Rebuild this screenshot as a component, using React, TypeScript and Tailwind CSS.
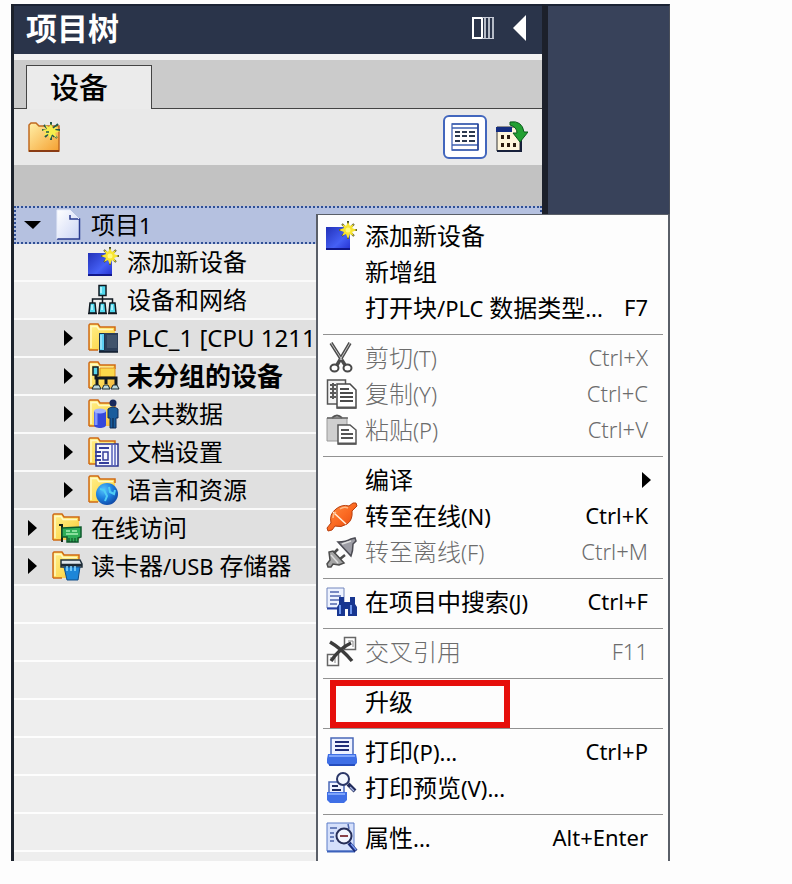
import type { ReactNode } from "react";
import clsx from "clsx";

type IconProps = { children: ReactNode };

function Icon({ children }: IconProps) {
  return (
    <svg viewBox="0 0 32 32" className="h-8 w-8 shrink-0" aria-hidden>
      {children}
    </svg>
  );
}

// Yellow folder that most tree icons sit on top of.
function Folder({ children }: IconProps) {
  return (
    <Icon>
      <defs>
        <linearGradient id="folder" x1="0" y1="0" x2="1" y2="1">
          <stop offset="0" stopColor="#fff08a" />
          <stop offset="0.6" stopColor="#fddc58" />
          <stop offset="1" stopColor="#f7b23c" />
        </linearGradient>
      </defs>
      <path d="M1 28V3l1-1h8l2 3h15v23z" fill="url(#folder)" />
      <path d="M1 28V3l1-1h8l2 3h15v4" fill="none" stroke="#cf6a14" strokeWidth="1.5" />
      <path d="M3 26V4.500h6l2 3h14" fill="none" stroke="#fff9c4" strokeWidth="1.500" />
      <path d="M1 28h9" stroke="#cf6a14" strokeWidth="1.5" />
      {children}
    </Icon>
  );
}

function Star({ x, y }: { x: number; y: number }) {
  return (
    <g transform={`translate(${x} ${y})`}>
      <path d="M0-9V9M-9 0H9M-6-6L6 6M6-6L-6 6" stroke="#454a30" strokeWidth="2" />
      <path d="M0-8l2 4 4-2-2 4 5 2-5 2 2 4-4-2-2 5-2-5-4 2 2-4-5-2 5-2-2-4 4 2z" fill="#f8e532" />
      <circle r="2.500" fill="#fffa80" />
    </g>
  );
}

const NewDeviceIcon = () => (
  <Icon>
    <defs>
      <linearGradient id="cube" x1="0" y1="0" x2="1" y2="1">
        <stop offset="0" stopColor="#2231b8" />
        <stop offset="0.6" stopColor="#4560f5" />
        <stop offset="1" stopColor="#2430d0" />
      </linearGradient>
    </defs>
    <path d="M0 7h24v23H0z" fill="url(#cube)" />
    <path d="M0 29h24" stroke="#10178a" strokeWidth="2" />
    <Star x={22} y={10} />
  </Icon>
);

const ProjectIcon = () => (
  <Icon>
    <defs>
      <linearGradient id="page" x1="0" y1="0" x2="1" y2="1">
        <stop offset="0" stopColor="#ffffff" />
        <stop offset="1" stopColor="#ccd5f5" />
      </linearGradient>
    </defs>
    <path d="M5 1h13l9 9v20H5z" fill="url(#page)" />
    <path d="M5 30h22.500V10H18V6" fill="none" stroke="#2b3c90" strokeWidth="1.5" />
    <path d="M5 30V1h13l9 9" fill="none" stroke="#e8edfb" />
  </Icon>
);

const NetworkIcon = () => (
  <Icon>
    <path d="M14.500 11v9M4.500 20v-5h20v5" fill="none" stroke="#101820" strokeWidth="1.5" />
    <g fill="#52d8ee" stroke="#101820" strokeWidth="1.500">
      <path d="M11 1.500h7v10h-7z" />
      <path d="M1 29l1-10h5l1 10zM11 29l1-10h5l1 10zM21 29l1-10h5l1 10z" />
    </g>
    <path d="M13 3v6M4 21v5M14 21v5M24 21v5" stroke="#c8f8ff" strokeWidth="1.5" />
    <path d="M0 29.500h9M10 29.500h9M20 29.500h9" stroke="#101820" strokeWidth="1.500" />
  </Icon>
);

const PlcIcon = () => (
  <Folder>
    <path d="M11 11h19v19H11z" fill="#2c3e58" />
    <path d="M11.500 11.500h5v17h-5z" fill="#5cd0f4" stroke="#1b3650" />
    <path d="M13 13v14" stroke="#c4f2ff" />
    <path d="M19 13h10v13H19z" fill="#40536b" />
    <path d="M11 30h19" stroke="#0e1a2a" strokeWidth="1.500" />
  </Folder>
);

const UngroupedIcon = () => (
  <Folder>
    <path d="M12 8h15v9H12z" fill="#fbd84a" stroke="#e0901c" />
    <path d="M5 7h5v8H5z" fill="#58d6ea" stroke="#101820" strokeWidth="1.5" />
    <path d="M8 15v3h20v7M9 18v7M18 18v6" fill="none" stroke="#101820" strokeWidth="3" />
    <path d="M4 29l2-4h5l2 4zM14 29l2-4h4l2 4zM23 29l2-4h4l2 4z" fill="#bcd8dc" stroke="#18262a" />
  </Folder>
);

const CommonDataIcon = () => (
  <Folder>
    <path d="M6 13v14c0 4 12 4 12 0V13z" fill="#3448dc" />
    <path d="M8 14v13" stroke="#7f95ff" strokeWidth="3" />
    <ellipse cx="12" cy="13" rx="6" ry="2.500" fill="#a3b4ff" />
    <circle cx="25" cy="5" r="3.500" fill="#16285c" />
    <path d="M20 11q5-4 10 0v9h-2v10h-6V20h-2z" fill="#195c9c" stroke="#112c58" />
    <path d="M25 20v10" stroke="#0c2040" />
  </Folder>
);

const DocSettingsIcon = () => (
  <Folder>
    <path d="M8 8h22v22H8z" fill="#f5f7ff" stroke="#2b3490" strokeWidth="1.500" />
    <path d="M24 8v22M27 8v22" stroke="#5661bb" strokeWidth="1.500" />
    <path d="M11 12h10M7 16h6M7 20h6M7 24h6M11 27h10" stroke="#343e9c" strokeWidth="1.800" />
    <path d="M15 16h5v8h-5z" fill="none" stroke="#343e9c" strokeWidth="1.500" />
  </Folder>
);

const LanguageIcon = () => (
  <Folder>
    <defs>
      <radialGradient id="globe" cx="0.35" cy="0.3" r="0.8">
        <stop offset="0" stopColor="#55c4fa" />
        <stop offset="0.5" stopColor="#1d80e0" />
        <stop offset="1" stopColor="#0c3f9c" />
      </radialGradient>
    </defs>
    <circle cx="19" cy="20" r="11" fill="url(#globe)" />
    <path d="M12 15l4 1 3 6-2 5M21 13l1 5 4 2 1-4" fill="none" stroke="#4fcdf4" strokeWidth="2" />
  </Folder>
);

const OnlineAccessIcon = () => (
  <Folder>
    <path d="M7 13h3v17" fill="none" stroke="#142018" strokeWidth="2" />
    <path d="M10 16l19-1v10l-3 1v4H15v-5h-5z" fill="#2fae58" stroke="#0e5a2c" strokeWidth="1.500" />
    <path d="M14 19h4M20 19h5M14 22h12" stroke="#a8efb4" strokeWidth="1.500" />
    <path d="M17 26v4M20 26v4M23 26v4" stroke="#0e4020" />
  </Folder>
);

const CardReaderIcon = () => (
  <Folder>
    <path d="M9 10h19l2 4v3H9z" fill="#dde5ea" stroke="#20303c" strokeWidth="1.500" />
    <path d="M9 15h21" stroke="#1d2a34" strokeWidth="2.500" />
    <path d="M12 17h16l-2 13H15z" fill="#1d86d8" stroke="#0f4c88" />
    <path d="M15 16v5M19 16v5M23 16v5" stroke="#8bdcff" strokeWidth="1.500" />
  </Folder>
);

const CutIcon = () => (
  <Icon>
    <path d="M5 1l14 22M24 1L11 23" stroke="#4c4c4c" strokeWidth="3.500" />
    <path d="M5 1l11 17M24 1L14 18" stroke="#c4c4c4" strokeWidth="1" />
    <ellipse cx="8.500" cy="26" rx="4" ry="3.500" fill="#fff" stroke="#484848" strokeWidth="2" />
    <ellipse cx="21.500" cy="26" rx="4" ry="3.500" fill="#fff" stroke="#484848" strokeWidth="2" />
  </Icon>
);

const CopyIcon = () => (
  <Icon>
    <path d="M1.500 2h18v24h-18z" fill="#f4f4f4" stroke="#555" strokeWidth="1.500" />
    <path d="M4 7h6M4 11h6M4 15h6M4 19h6M7 5v16" stroke="#5a5a5a" strokeWidth="2" />
    <path d="M11 6h13l6 6v18H11z" fill="#fff" stroke="#484848" strokeWidth="1.500" />
    <path d="M14 11h9M14 15h13M14 19h13M14 23h13" stroke="#4c4c4c" strokeWidth="2" />
    <path d="M11 29.500h19" stroke="#555" strokeWidth="2" />
  </Icon>
);

const PasteIcon = () => (
  <Icon>
    <path d="M1 4h20v23H1z" fill="#cfcfcf" stroke="#9a9a9a" />
    <path d="M6 4q5-5 10 0" fill="#ddd" stroke="#555" strokeWidth="2" />
    <path d="M1 4h21" stroke="#666" strokeWidth="1.500" />
    <path d="M12 11h12l6 5v14H12z" fill="#fff" stroke="#555" strokeWidth="1.500" />
    <path d="M15 16h8M15 20h12M15 24h12" stroke="#555" strokeWidth="2" />
    <path d="M12 29.500h18" stroke="#555" strokeWidth="2" />
  </Icon>
);

const GoOnlineIcon = () => (
  <Icon>
    <defs>
      <linearGradient id="plug" x1="0" y1="0" x2="1" y2="1">
        <stop offset="0" stopColor="#ff9044" />
        <stop offset="0.5" stopColor="#fb6a22" />
        <stop offset="1" stopColor="#e2430c" />
      </linearGradient>
    </defs>
    <path
      d="M2 31l-1-3 4-5q-2-9 5-14 6-5 13-3l4-3h3l1 3-5 5q1 9-5 13-6 4-12 2l-3 4z"
      fill="url(#plug)"
      stroke="#b8400f"
      strokeWidth="1"
    />
    <path d="M7 12l13 12" stroke="#fff0dc" strokeWidth="1.500" />
    <path d="M7 18q0-4 3-6M14 9q4-3 8-1" fill="none" stroke="#ffba86" strokeWidth="1.500" />
  </Icon>
);

const GoOfflineIcon = () => (
  <Icon>
    <path d="M12 6q8 0 13-3l4-1 1 3-3 3q0 7-2 12z" fill="#9c9ca4" stroke="#4c4c54" strokeWidth="1.500" />
    <path d="M16 8l9-3" stroke="#ddd" strokeWidth="1.500" />
    <path d="M2 31l-1-3 3-4-1-8 4-1 11 12-5 2-6-1-2 3z" fill="#a4a4a4" stroke="#4c4c4c" strokeWidth="1.500" />
    <path d="M8 17l4-4M14 23l5-4" stroke="#4c4c4c" strokeWidth="2.500" />
    <path d="M5 19l7 8" stroke="#dedede" strokeWidth="1.500" />
  </Icon>
);

const FindIcon = () => (
  <Icon>
    <path d="M1 2h17v20H1z" fill="#eef3ff" stroke="#7386bd" />
    <path d="M4 6h9M4 10h11M4 14h9M4 18h7" stroke="#5267ae" strokeWidth="1.500" />
    <path d="M1 22.500h10" stroke="#2a42a5" strokeWidth="2" />
    <path d="M13 11h5v5h6v-5h5v7l2 3v9h-9v-7h-3v7h-8v-9l2-3z" fill="#183690" />
    <path d="M14 19v9M25 19v9" stroke="#6e96ec" strokeWidth="2" />
  </Icon>
);

const CrossRefIcon = () => (
  <Icon>
    <path d="M18.500 1.500h11v12h-11zM1.500 18.500h11v11h-11z" fill="#fff" stroke="#666" strokeWidth="1.500" />
    <path d="M22 5h5v6M4 22h5v5" fill="none" stroke="#888" />
    <path d="M4 6q12 7 22 19M5 25Q14 12 25 7" fill="none" stroke="#3c3c3c" strokeWidth="3.500" />
  </Icon>
);

const PrintIcon = () => (
  <Icon>
    <path d="M5 2h22v18H5z" fill="#eef2ff" stroke="#4a68b8" strokeWidth="1.500" />
    <path d="M9 6h14M9 10h14M9 14h14" stroke="#1f2c78" strokeWidth="2" />
    <path d="M2 18h28l1 5v4l-3 3H4l-3-3v-4z" fill="#3f6fe6" />
    <path d="M3 20h26" stroke="#7ea4fa" strokeWidth="2" />
    <path d="M3 29h26" stroke="#1d42b0" strokeWidth="1.500" />
  </Icon>
);

const PreviewIcon = () => (
  <Icon>
    <path d="M3 10h15v12H3z" fill="#eef2ff" stroke="#4a68b8" strokeWidth="1.500" />
    <path d="M6 14h6M6 18h9" stroke="#1f2c60" strokeWidth="2" />
    <path d="M1 20h20v8l-3 3H4l-3-3z" fill="#3f6fe6" />
    <path d="M2 22h17" stroke="#7ea4fa" strokeWidth="2" />
    <path d="M22 12l7 7" stroke="#222c5c" strokeWidth="4" />
    <path d="M24 15l4 4" stroke="#a9b8e8" strokeWidth="1.500" />
    <circle cx="17" cy="7" r="6" fill="#f4f8ff" stroke="#2b3768" strokeWidth="2" />
  </Icon>
);

const PropertiesIcon = () => (
  <Icon>
    <path d="M1 1h27v28H1z" fill="#d5e0fb" stroke="#5c7cc8" />
    <path d="M1 29.500h28" stroke="#3c62bc" strokeWidth="2" />
    <path d="M4 6h7M4 11h4M4 15h4M4 19h4M22 2l1 5" stroke="#4a62a8" strokeWidth="1.500" />
    <path d="M23 21l7 8" stroke="#1c2c78" strokeWidth="4" />
    <path d="M25 22l5 6" stroke="#7a9af0" strokeWidth="1.500" />
    <circle cx="18" cy="14" r="7.500" fill="#f2f5ff" stroke="#262e58" strokeWidth="2" />
    <path d="M14 14h8" stroke="#8a4048" strokeWidth="2" />
  </Icon>
);

const AddFolderIcon = () => (
  <Icon>
    <defs>
      <linearGradient id="addFolder" x1="0" y1="0" x2="1" y2="1">
        <stop offset="0" stopColor="#fff0a8" />
        <stop offset="1" stopColor="#f5a030" />
      </linearGradient>
    </defs>
    <path d="M1 30V4l2-2h5l3 3h20v25z" fill="url(#addFolder)" stroke="#c06a20" strokeWidth="1.500" />
    <path d="M1 30h30" stroke="#8a3c14" strokeWidth="2" />
    <g transform="translate(23 10)">
      <path d="M0-9V9M-9-1H9M-7-6L6 7M7-7L-6 6" stroke="#24594c" strokeWidth="2" />
      <path d="M0-7l2 4 5-2-3 4 5 1-5 2 2 5-5-3-2 4-2-5-4 2 2-4-4-2 5-1-2-4 4 2z" fill="#f6ee4c" />
      <path d="M-5 1h3M2-3l2-2M1 4l2 2" stroke="#24594c" strokeWidth="1.500" />
    </g>
  </Icon>
);

const DetailsIcon = () => (
  <Icon>
    <path d="M3 3h26v26H3z" fill="#fff" stroke="#5c7ac0" strokeWidth="1.500" />
    <path d="M3 3h26M3 7h26M3 24h26M3 29h26" stroke="#3e60b0" strokeWidth="1.500" />
    <path d="M29 3v26" stroke="#243f90" strokeWidth="1.500" />
    <path d="M6 11h5M13 11h5M20 11h6M6 15h5M13 15h5M20 15h6M6 20h5M13 20h5M20 20h6" stroke="#2c3a50" strokeWidth="2" />
  </Icon>
);

const OverviewIcon = () => (
  <Icon>
    <path d="M1 6h23v24H1z" fill="#fff6dc" stroke="#333" strokeWidth="1" />
    <path d="M0 6h16v5H0z" fill="#142d80" />
    <path d="M1 30h24V17" fill="none" stroke="#17203a" strokeWidth="2" />
    <path d="M5 16h3M11 16h3M5 24h3M11 24h3M17 24h3" stroke="#2c1c10" strokeWidth="4" />
    <path d="M14 1q12-2 14 10h4l-8 10-7-9h4q0-6-7-8z" fill="#22a032" stroke="#0b5c1c" />
  </Icon>
);

type TreeItem = {
  label: string;
  icon: ReactNode;
  level: 1 | 2;
  expandable?: boolean;
  bold?: boolean;
};

const treeItems: TreeItem[] = [
  { label: "添加新设备", icon: <NewDeviceIcon />, level: 2 },
  { label: "设备和网络", icon: <NetworkIcon />, level: 2 },
  { label: "PLC_1 [CPU 1211C]", icon: <PlcIcon />, level: 2, expandable: true },
  { label: "未分组的设备", icon: <UngroupedIcon />, level: 2, expandable: true, bold: true },
  { label: "公共数据", icon: <CommonDataIcon />, level: 2, expandable: true },
  { label: "文档设置", icon: <DocSettingsIcon />, level: 2, expandable: true },
  { label: "语言和资源", icon: <LanguageIcon />, level: 2, expandable: true },
  { label: "在线访问", icon: <OnlineAccessIcon />, level: 1, expandable: true },
  { label: "读卡器/USB 存储器", icon: <CardReaderIcon />, level: 1, expandable: true },
];

type MenuEntry = {
  label: string;
  icon?: ReactNode;
  shortcut?: string;
  disabled?: boolean;
  submenu?: boolean;
  highlight?: boolean;
};

const menuGroups: MenuEntry[][] = [
  [
    { label: "添加新设备", icon: <NewDeviceIcon /> },
    { label: "新增组" },
    { label: "打开块/PLC 数据类型...", shortcut: "F7" },
  ],
  [
    { label: "剪切(T)", icon: <CutIcon />, shortcut: "Ctrl+X", disabled: true },
    { label: "复制(Y)", icon: <CopyIcon />, shortcut: "Ctrl+C", disabled: true },
    { label: "粘贴(P)", icon: <PasteIcon />, shortcut: "Ctrl+V", disabled: true },
  ],
  [
    { label: "编译", submenu: true },
    { label: "转至在线(N)", icon: <GoOnlineIcon />, shortcut: "Ctrl+K" },
    { label: "转至离线(F)", icon: <GoOfflineIcon />, shortcut: "Ctrl+M", disabled: true },
  ],
  [{ label: "在项目中搜索(J)", icon: <FindIcon />, shortcut: "Ctrl+F" }],
  [{ label: "交叉引用", icon: <CrossRefIcon />, shortcut: "F11", disabled: true }],
  [{ label: "升级", highlight: true }],
  [
    { label: "打印(P)...", icon: <PrintIcon />, shortcut: "Ctrl+P" },
    { label: "打印预览(V)...", icon: <PreviewIcon /> },
  ],
  [{ label: "属性...", icon: <PropertiesIcon />, shortcut: "Alt+Enter" }],
];

// Latin runs inside Chinese labels are set a little smaller.
function Label({ text }: { text: string }) {
  const runs = text.split(/([ -~]+)/).filter(Boolean);
  if (runs.length === 1) return text;
  return runs.map((run, i) =>
    /^[ -~]/.test(run) ? (
      <span key={i} className="text-[22px]">
        {run}
      </span>
    ) : (
      run
    ),
  );
}

function Arrow({ open }: { open?: boolean }) {
  return (
    <svg viewBox="0 0 18 18" className="h-[18px] w-[18px] shrink-0" aria-hidden>
      <path d={open ? "M0 5h17l-8 8z" : "M4 1v16l9-8z"} fill="#000" />
    </svg>
  );
}

function TreeRow({ item }: { item: TreeItem }) {
  return (
    <li
      className={clsx(
        "border-b-2 border-[#fafafa]",
        item.expandable ? "bg-[#e0e0e0]" : "bg-[#eeeeee]",
      )}
    >
      <button
        type="button"
        className={clsx(
          "flex h-9 w-full items-center whitespace-nowrap text-left",
          item.level === 1 ? "pl-[10px]" : "pl-[46px]",
          item.bold ? "text-[26px] font-bold" : "text-2xl",
        )}
      >
        <span className="w-7 shrink-0">{item.expandable && <Arrow />}</span>
        {item.icon}
        <span className="ml-[7px]">
          <Label text={item.label} />
        </span>
      </button>
    </li>
  );
}

function ProjectTree() {
  return (
    <section className="min-w-0 flex-1 border-l-[3px] border-[#1c222c] bg-[#eeeeee]">
      <header className="flex h-[50px] items-center border-t-2 border-[#1b2334] bg-[#2a344a] px-3 pb-1 text-white">
        <h1 className="flex-1 text-[31px] font-bold">项目树</h1>
        <button type="button" aria-label="列" className="mr-[18px]">
          <svg viewBox="0 0 22 22" className="h-[22px] w-[22px]" aria-hidden>
            <path d="M1 1h9v20H1z" fill="none" stroke="#fff" strokeWidth="2" />
            <path d="M13 0v22M17 0v22M21 0v22" stroke="#e4e8f0" strokeWidth="1.500" />
            <path d="M10 .5h12M10 21.500h12" stroke="#c8ccd8" />
          </svg>
        </button>
        <button type="button" aria-label="折叠">
          <svg viewBox="0 0 18 26" className="h-[26px] w-[18px]" aria-hidden>
            <path d="M14 0v26L1 13z" fill="#fff" />
          </svg>
        </button>
      </header>

      <div className="flex h-[55px] items-end border-t-[6px] border-[#f1f1f1] bg-[#cbcbcb]">
        <span className="w-3 border-b border-[#444]" />
        <button
          type="button"
          className="h-11 w-[126px] border border-b-0 border-[#444] bg-[#ebebeb] pr-5 text-[29px] leading-10 font-medium"
        >
          设备
        </button>
        <span className="flex-1 border-b border-[#444]" />
      </div>

      <div className="flex h-14 items-center bg-[#e9e9e9] pr-[14px] pl-[14px]">
        <button type="button" aria-label="新增组" className="flex-1">
          <AddFolderIcon />
        </button>
        <button
          type="button"
          aria-label="详细信息"
          className="flex h-11 w-11 items-center justify-center rounded-md border-2 border-[#4266bd] bg-white"
        >
          <DetailsIcon />
        </button>
        <button type="button" aria-label="总览" className="ml-[9px]">
          <OverviewIcon />
        </button>
      </div>
      <div className="h-[41px] bg-[#c2c2c2]" />

      <ul>
        <li>
          <button
            type="button"
            className="flex h-[38px] w-full items-center border-2 border-dotted border-[#2f4f94] bg-[#b5c1e0] pl-2 text-left text-2xl"
          >
            <span className="w-7 shrink-0">
              <Arrow open />
            </span>
            <ProjectIcon />
            <span className="ml-[7px]">
              <Label text="项目1" />
            </span>
          </button>
        </li>
        {treeItems.map((item) => (
          <TreeRow key={item.label} item={item} />
        ))}
        {[1, 2, 3, 4, 5, 6, 7].map((n) => (
          <li key={n} className="h-[38px] border-b-2 border-[#fdfdfd]" />
        ))}
        <li className="h-[9px]" />
      </ul>
    </section>
  );
}

function MenuRow({ entry }: { entry: MenuEntry }) {
  return (
    <button
      type="button"
      role="menuitem"
      disabled={entry.disabled}
      className={clsx(
        "relative flex h-9 w-full items-center pr-5 pl-2 text-left text-2xl whitespace-nowrap",
        entry.disabled ? "font-light text-[#6c6c6c]" : "text-black",
      )}
    >
      <span className="mr-[7px] w-8 shrink-0">{entry.icon}</span>
      <span className="flex-1">
        <Label text={entry.label} />
      </span>
      {entry.shortcut && <span className="text-[22px]">{entry.shortcut}</span>}
      {entry.submenu && (
        <span className="-mr-2">
          <Arrow />
        </span>
      )}
      {entry.highlight && (
        <span className="absolute -top-1 -bottom-2 left-3 w-[180px] border-[6px] border-[#e60f0b]" aria-hidden />
      )}
    </button>
  );
}

function ContextMenu() {
  return (
    <div
      role="menu"
      className="absolute top-[210px] right-0 bottom-0 left-[305px] border-x-2 border-t border-[#5a5f68] bg-[#fdfdfd] pt-[3px]"
    >
      {menuGroups.map((group, i) => (
        <div key={i}>
          {i > 0 && <hr className="mx-[5px] mt-2 mb-[5px] border-t border-[#929292]" />}
          {group.map((entry) => (
            <MenuRow key={entry.label} entry={entry} />
          ))}
        </div>
      ))}
    </div>
  );
}

export default function App() {
  return (
    <div className="min-h-screen bg-[#fdfdfd] pt-1 pr-[122px] pl-[11px] font-['Noto_Sans','Noto_Sans_CJK_SC',sans-serif] text-black">
      <main className="relative flex">
        <ProjectTree />
        <aside className="w-[128px] border-t-2 border-r border-l-[6px] border-t-[#1b2334] border-r-[#4a4f5a] border-l-[#1c202b] bg-[#38425a]" />
        <ContextMenu />
      </main>
    </div>
  );
}
